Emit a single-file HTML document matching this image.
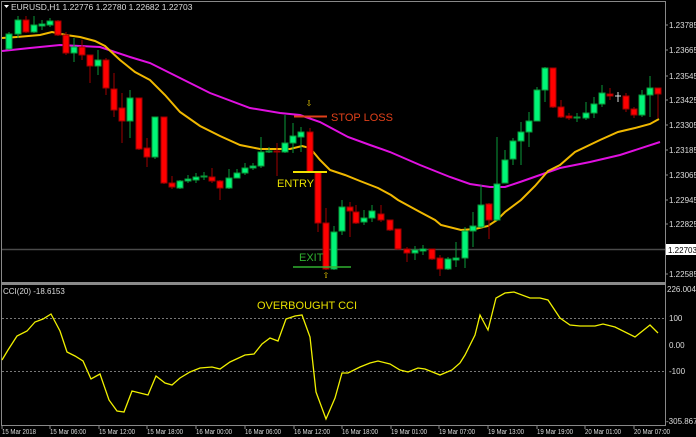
<!DOCTYPE html>
<html><head><style>
html,body{margin:0;padding:0;background:#000;}
svg{display:block;}
text{font-family:"Liberation Sans",sans-serif;}
</style></head><body>
<svg width="696" height="437" viewBox="0 0 696 437" xmlns="http://www.w3.org/2000/svg">
<rect width="696" height="437" fill="#000"/>
<line x1="1.5" y1="1" x2="1.5" y2="425" stroke="#888" stroke-width="1"/>
<line x1="1" y1="1.5" x2="665" y2="1.5" stroke="#888"/>
<line x1="665.5" y1="1" x2="665.5" y2="426" stroke="#888"/>
<line x1="1" y1="425.5" x2="666" y2="425.5" stroke="#888"/>
<rect x="1" y="282" width="665" height="3" fill="#8a8a8a"/>
<line x1="2" y1="249.5" x2="665" y2="249.5" stroke="#4a4a4a" stroke-width="1.5"/>
<line x1="2" y1="318.5" x2="665" y2="318.5" stroke="#777" stroke-dasharray="2,2"/>
<line x1="2" y1="371.5" x2="665" y2="371.5" stroke="#777" stroke-dasharray="2,2"/>

<path d="M4 5 L9 5 L6.5 8 Z" fill="#fff"/>
<text x="11" y="10" font-size="8.5" fill="#ddd">EURUSD,H1  1.22776 1.22780 1.22682 1.22703</text>
<text x="3" y="294" font-size="8" fill="#ddd">CCI(20) -18.6153</text>

<polyline fill="none" stroke="#e010e0" stroke-width="2" points="2,51 30,48 60,45 100,47 130,57 150,63 180,78 210,93 250,108 280,113 300,115 320,122 348,137 370,145 390,152 420,165 450,177 470,184 490,187 505,187 520,182 540,175 560,168 590,162 620,155 660,142"/>
<polyline fill="none" stroke="#f0b800" stroke-width="2" points="2,38 17,37 40,35 52,32 66,35 80,37 95,41 105,46 120,60 135,72 150,80 165,95 180,112 200,126 220,136 240,145 260,149 275,149 290,149 302,146 310,148 320,160 330,170 345,175 360,181 378,188 391,195 398,200 420,212 435,220 441,225 461,230 475,229 488,226 497,220 505,212 521,200 535,186 548,171 560,165 575,152 600,140 618,132 635,128 650,124 659,119"/>

<g stroke-width="1">
<g stroke="#0a9a3a" fill="#00f578">
<line x1="9" y1="32" x2="9" y2="50"/><rect x="6" y="34" width="6" height="15"/>
<line x1="18" y1="16" x2="18" y2="38"/><rect x="15" y="20" width="6" height="14"/>
<line x1="34" y1="16" x2="34" y2="33"/><rect x="31" y="25" width="6" height="7"/>
<line x1="42" y1="20" x2="42" y2="30"/><rect x="39" y="24" width="6" height="2"/>
<line x1="50" y1="18" x2="50" y2="27"/><rect x="47" y="21" width="6" height="4"/>
<line x1="74" y1="38" x2="74" y2="62"/><rect x="71" y="47" width="6" height="6"/>
<line x1="98" y1="50" x2="98" y2="75"/><rect x="95" y="60" width="6" height="6"/>
<line x1="130" y1="90" x2="130" y2="138"/><rect x="127" y="98" width="6" height="23"/>
<line x1="155" y1="117" x2="155" y2="159"/><rect x="152" y="117" width="6" height="40"/>
<line x1="180" y1="180" x2="180" y2="189"/><rect x="177" y="181" width="6" height="7"/>
<line x1="188" y1="175" x2="188" y2="183"/><rect x="185" y="179" width="6" height="2"/>
<line x1="196" y1="173" x2="196" y2="183"/><rect x="193" y="177" width="6" height="3"/>
<line x1="204" y1="172" x2="204" y2="180"/><rect x="201" y="176" width="6" height="1"/>
<line x1="229" y1="169" x2="229" y2="189"/><rect x="226" y="178" width="6" height="10"/>
<line x1="237" y1="169" x2="237" y2="178"/><rect x="234" y="173" width="6" height="5"/>
<line x1="245" y1="163" x2="245" y2="175"/><rect x="242" y="168" width="6" height="5"/>
<line x1="253" y1="163" x2="253" y2="170"/><rect x="250" y="166" width="6" height="2"/>
<line x1="261" y1="137" x2="261" y2="168"/><rect x="258" y="152" width="6" height="14"/>
<line x1="269" y1="147" x2="269" y2="153"/><rect x="266" y="151" width="6" height="1"/>
<line x1="285" y1="115" x2="285" y2="153"/><rect x="282" y="143" width="6" height="9"/>
<line x1="293" y1="123" x2="293" y2="153"/><rect x="290" y="136" width="6" height="7"/>
<line x1="301" y1="127" x2="301" y2="152"/><rect x="298" y="132" width="6" height="5"/>
<line x1="334" y1="226" x2="334" y2="270"/><rect x="331" y="232" width="6" height="37"/>
<line x1="342" y1="200" x2="342" y2="235"/><rect x="339" y="207" width="6" height="24"/>
<line x1="364" y1="210" x2="364" y2="225"/><rect x="361" y="218" width="6" height="4"/>
<line x1="372" y1="205" x2="372" y2="222"/><rect x="369" y="211" width="6" height="7"/>
<line x1="415" y1="246" x2="415" y2="260"/><rect x="412" y="250" width="6" height="3"/>
<line x1="423" y1="245" x2="423" y2="255"/><rect x="420" y="249" width="6" height="2"/>
<line x1="448" y1="257" x2="448" y2="270"/><rect x="445" y="259" width="6" height="10"/>
<line x1="456" y1="242" x2="456" y2="267"/><rect x="453" y="258" width="6" height="2"/>
<line x1="465" y1="227" x2="465" y2="268"/><rect x="462" y="231" width="6" height="27"/>
<line x1="473" y1="212" x2="473" y2="247"/><rect x="470" y="226" width="6" height="5"/>
<line x1="481" y1="185" x2="481" y2="228"/><rect x="478" y="205" width="6" height="22"/>
<line x1="497" y1="137" x2="497" y2="221"/><rect x="494" y="184" width="6" height="36"/>
<line x1="505" y1="150" x2="505" y2="183"/><rect x="502" y="160" width="6" height="23"/>
<line x1="513" y1="138" x2="513" y2="165"/><rect x="510" y="141" width="6" height="18"/>
<line x1="521" y1="122" x2="521" y2="165"/><rect x="518" y="132" width="6" height="9"/>
<line x1="529" y1="112" x2="529" y2="147"/><rect x="526" y="121" width="6" height="11"/>
<line x1="537" y1="87" x2="537" y2="121"/><rect x="534" y="90" width="6" height="31"/>
<line x1="545" y1="67" x2="545" y2="102"/><rect x="542" y="68" width="6" height="22"/>
<line x1="577" y1="113" x2="577" y2="122"/><rect x="574" y="117" width="6" height="1"/>
<line x1="586" y1="102" x2="586" y2="120"/><rect x="583" y="113" width="6" height="5"/>
<line x1="594" y1="97" x2="594" y2="118"/><rect x="591" y="104" width="6" height="9"/>
<line x1="602" y1="85" x2="602" y2="107"/><rect x="599" y="93" width="6" height="11"/>
<line x1="642" y1="90" x2="642" y2="117"/><rect x="639" y="95" width="6" height="20"/>
<line x1="650" y1="76" x2="650" y2="117"/><rect x="647" y="88" width="6" height="7"/>
</g>
<g stroke="#a00000" fill="#ff0000">
<line x1="26" y1="16" x2="26" y2="33"/><rect x="23" y="20" width="6" height="12"/>
<line x1="58" y1="20" x2="58" y2="36"/><rect x="55" y="21" width="6" height="14"/>
<line x1="66" y1="32" x2="66" y2="55"/><rect x="63" y="35" width="6" height="18"/>
<line x1="82" y1="40" x2="82" y2="60"/><rect x="79" y="47" width="6" height="8"/>
<line x1="90" y1="55" x2="90" y2="83"/><rect x="87" y="55" width="6" height="11"/>
<line x1="106" y1="58" x2="106" y2="95"/><rect x="103" y="60" width="6" height="28"/>
<line x1="114" y1="73" x2="114" y2="117"/><rect x="111" y="89" width="6" height="21"/>
<line x1="122" y1="93" x2="122" y2="143"/><rect x="119" y="108" width="6" height="13"/>
<line x1="139" y1="98" x2="139" y2="150"/><rect x="136" y="98" width="6" height="51"/>
<line x1="147" y1="138" x2="147" y2="167"/><rect x="144" y="148" width="6" height="9"/>
<line x1="164" y1="117" x2="164" y2="184"/><rect x="161" y="117" width="6" height="66"/>
<line x1="172" y1="176" x2="172" y2="189"/><rect x="169" y="183" width="6" height="4"/>
<line x1="212" y1="168" x2="212" y2="183"/><rect x="209" y="177" width="6" height="4"/>
<line x1="220" y1="180" x2="220" y2="200"/><rect x="217" y="181" width="6" height="7"/>
<line x1="277" y1="143" x2="277" y2="176"/><rect x="274" y="151" width="6" height="1"/>
<line x1="310" y1="128" x2="310" y2="173"/><rect x="307" y="132" width="6" height="40"/>
<line x1="318" y1="172" x2="318" y2="232"/><rect x="315" y="172" width="6" height="51"/>
<line x1="326" y1="208" x2="326" y2="270"/><rect x="323" y="223" width="6" height="46"/>
<line x1="350" y1="202" x2="350" y2="237"/><rect x="347" y="207" width="6" height="4"/>
<line x1="356" y1="205" x2="356" y2="224"/><rect x="353" y="212" width="6" height="11"/>
<line x1="381" y1="205" x2="381" y2="222"/><rect x="378" y="214" width="6" height="6"/>
<line x1="390" y1="220" x2="390" y2="231"/><rect x="387" y="220" width="6" height="10"/>
<line x1="398" y1="229" x2="398" y2="250"/><rect x="395" y="229" width="6" height="20"/>
<line x1="407" y1="247" x2="407" y2="262"/><rect x="404" y="249" width="6" height="4"/>
<line x1="432" y1="249" x2="432" y2="260"/><rect x="429" y="249" width="6" height="10"/>
<line x1="440" y1="255" x2="440" y2="276"/><rect x="437" y="258" width="6" height="11"/>
<line x1="489" y1="203" x2="489" y2="239"/><rect x="486" y="204" width="6" height="16"/>
<line x1="553" y1="68" x2="553" y2="108"/><rect x="550" y="68" width="6" height="39"/>
<line x1="561" y1="100" x2="561" y2="118"/><rect x="558" y="107" width="6" height="10"/>
<line x1="569" y1="113" x2="569" y2="120"/><rect x="566" y="116" width="6" height="2"/>
<line x1="610" y1="88" x2="610" y2="100"/><rect x="607" y="94" width="6" height="2"/>
<line x1="626" y1="93" x2="626" y2="112"/><rect x="623" y="96" width="6" height="13"/>
<line x1="634" y1="107" x2="634" y2="118"/><rect x="631" y="109" width="6" height="6"/>
<line x1="658" y1="88" x2="658" y2="118"/><rect x="655" y="88" width="6" height="6"/>
</g>
<g stroke="#ddd"><line x1="618" y1="92" x2="618" y2="102"/><line x1="615" y1="96" x2="621" y2="96"/></g>
</g>

<line x1="294" y1="116.5" x2="327" y2="116.5" stroke="#e0401a" stroke-width="2"/>
<text x="331" y="121" font-size="11" fill="#e0401a">STOP LOSS</text>
<line x1="293" y1="172" x2="327" y2="172" stroke="#f0e000" stroke-width="2"/>
<text x="277" y="187" font-size="11" fill="#e8e000">ENTRY</text>
<text x="299" y="261" font-size="11" fill="#30b030">EXIT</text>
<line x1="293" y1="267" x2="351" y2="267" stroke="#30b030" stroke-width="1.5"/>
<text x="309" y="106" font-size="8" fill="#e0c000" text-anchor="middle">⇩</text>
<text x="326" y="278" font-size="8" fill="#e0c000" text-anchor="middle">⇧</text>
<text x="257" y="309" font-size="11" fill="#e8e000">OVERBOUGHT CCI</text>

<polyline fill="none" stroke="#f0f000" stroke-width="1.3" points="2,360 8,350 17,336 27,331 35,322 43,319 51,314 60,331 67,352 75,356 83,361 91,379 100,374 109,400 117,411 124,412 132,391 148,395 156,376 165,383 172,385 180,378 190,372 200,368 212,367 220,369 230,362 245,355 254,354 262,344 270,338 278,341 286,319 295,316 302,315 310,337 316,392 326,419 335,398 342,373 348,373 360,367 370,363 378,361 390,364 400,370 408,372 418,368 425,369 440,375 452,370 460,363 465,355 475,335 480,315 488,330 496,298 505,293 514,292 530,298 540,298 548,300 560,318 570,325 580,326 595,326 603,324 615,327 635,337 650,325 658,333"/>

<g font-size="8" fill="#ddd">
<text x="669" y="28">1.23785</text>
<text x="669" y="53">1.23665</text>
<text x="669" y="79">1.23545</text>
<text x="669" y="103">1.23425</text>
<text x="669" y="128">1.23305</text>
<text x="669" y="153">1.23185</text>
<text x="669" y="178">1.23065</text>
<text x="669" y="203">1.22945</text>
<text x="669" y="227">1.22825</text>
<text x="669" y="277">1.22585</text>
<text x="667" y="292">226.004</text>
<text x="669" y="321">100</text>
<text x="669" y="348">0.00</text>
<text x="669" y="374">-100</text>
<text x="666" y="424">-305.8672</text>
</g>
<rect x="666" y="244" width="30" height="11" fill="#fff"/>
<text x="668" y="253" font-size="8" fill="#000">1.22703</text>
<g stroke="#888">
<line x1="665" y1="25" x2="668" y2="25"/><line x1="665" y1="50" x2="668" y2="50"/><line x1="665" y1="76" x2="668" y2="76"/><line x1="665" y1="100" x2="668" y2="100"/><line x1="665" y1="125" x2="668" y2="125"/><line x1="665" y1="150" x2="668" y2="150"/><line x1="665" y1="175" x2="668" y2="175"/><line x1="665" y1="200" x2="668" y2="200"/><line x1="665" y1="224" x2="668" y2="224"/><line x1="665" y1="274" x2="668" y2="274"/>
</g>

<g font-size="7.5" fill="#ddd" lengthAdjust="spacingAndGlyphs">
<text x="2" y="434" textLength="34" lengthAdjust="spacingAndGlyphs">15 Mar 2018</text>
<text x="50" y="434" textLength="36" lengthAdjust="spacingAndGlyphs">15 Mar 06:00</text>
<text x="99" y="434" textLength="36" lengthAdjust="spacingAndGlyphs">15 Mar 12:00</text>
<text x="147" y="434" textLength="36" lengthAdjust="spacingAndGlyphs">15 Mar 18:00</text>
<text x="196" y="434" textLength="36" lengthAdjust="spacingAndGlyphs">16 Mar 00:00</text>
<text x="245" y="434" textLength="36" lengthAdjust="spacingAndGlyphs">16 Mar 06:00</text>
<text x="294" y="434" textLength="36" lengthAdjust="spacingAndGlyphs">16 Mar 12:00</text>
<text x="342" y="434" textLength="36" lengthAdjust="spacingAndGlyphs">16 Mar 18:00</text>
<text x="391" y="434" textLength="36" lengthAdjust="spacingAndGlyphs">19 Mar 01:00</text>
<text x="439" y="434" textLength="36" lengthAdjust="spacingAndGlyphs">19 Mar 07:00</text>
<text x="488" y="434" textLength="36" lengthAdjust="spacingAndGlyphs">19 Mar 13:00</text>
<text x="537" y="434" textLength="36" lengthAdjust="spacingAndGlyphs">19 Mar 19:00</text>
<text x="585" y="434" textLength="36" lengthAdjust="spacingAndGlyphs">20 Mar 01:00</text>
<text x="634" y="434" textLength="36" lengthAdjust="spacingAndGlyphs">20 Mar 07:00</text>
</g>
<g stroke="#888">
<line x1="2" y1="426" x2="2" y2="429"/><line x1="50" y1="426" x2="50" y2="429"/><line x1="99" y1="426" x2="99" y2="429"/><line x1="147" y1="426" x2="147" y2="429"/><line x1="196" y1="426" x2="196" y2="429"/><line x1="245" y1="426" x2="245" y2="429"/><line x1="294" y1="426" x2="294" y2="429"/><line x1="342" y1="426" x2="342" y2="429"/><line x1="391" y1="426" x2="391" y2="429"/><line x1="439" y1="426" x2="439" y2="429"/><line x1="488" y1="426" x2="488" y2="429"/><line x1="537" y1="426" x2="537" y2="429"/><line x1="585" y1="426" x2="585" y2="429"/><line x1="634" y1="426" x2="634" y2="429"/>
</g>
</svg>
</body></html>
